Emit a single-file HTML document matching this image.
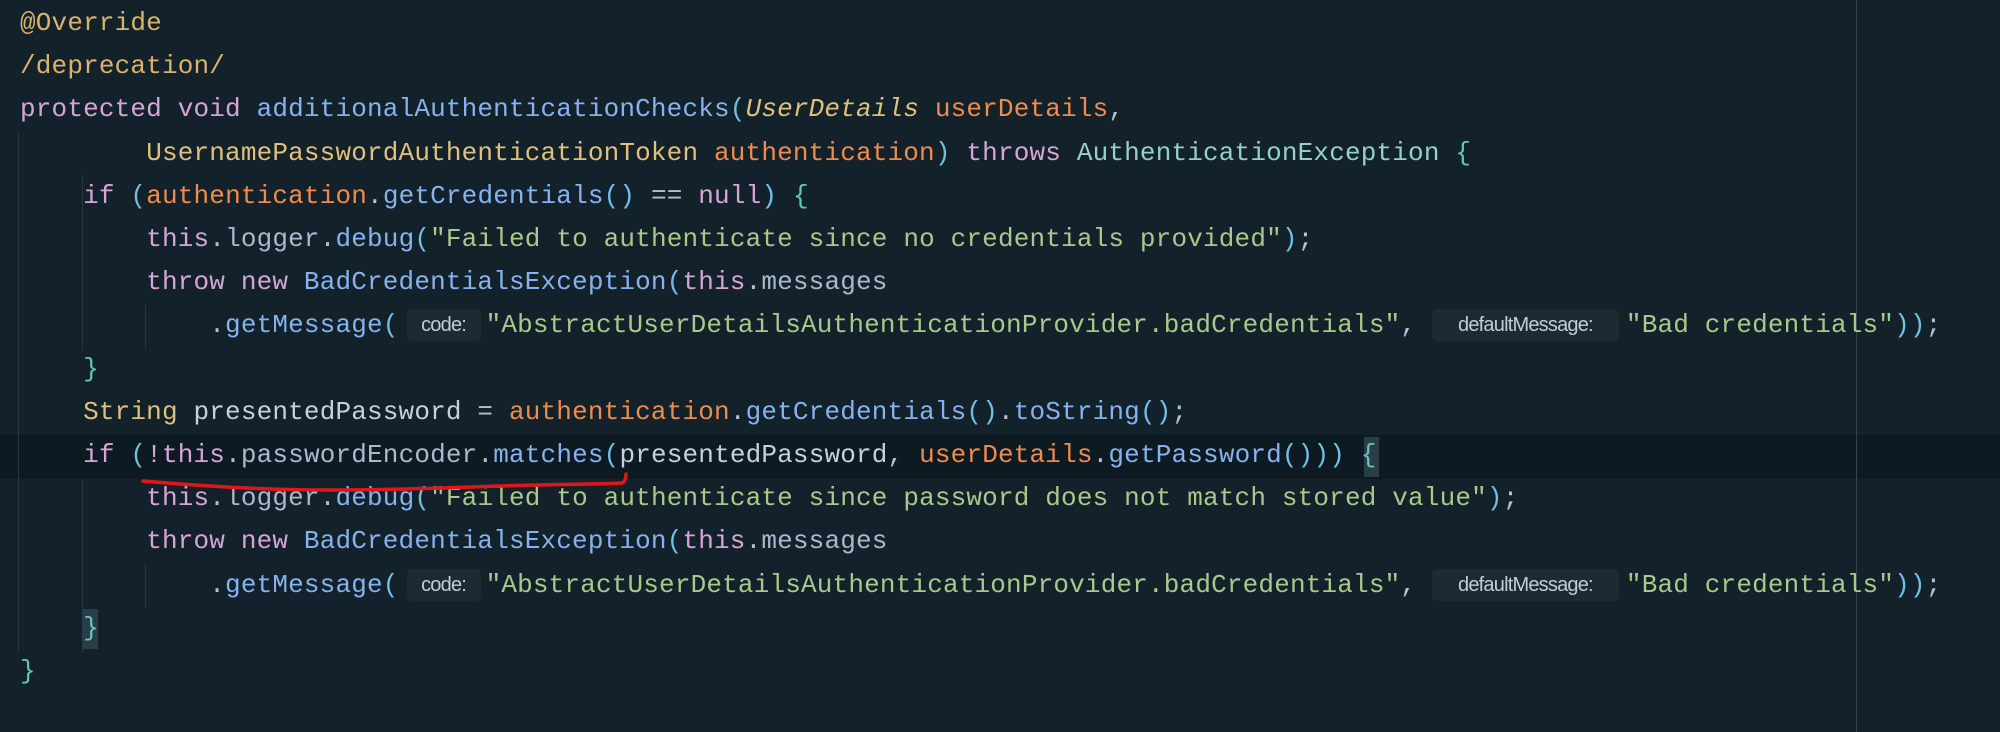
<!DOCTYPE html>
<html><head><meta charset="utf-8"><style>
html,body{margin:0;padding:0;}
body{width:2000px;height:732px;background:#13212a;position:relative;overflow:hidden;
font-family:"Liberation Mono",monospace;font-size:26px;letter-spacing:0.17px;}
.l{position:absolute;left:20px;height:43.2px;line-height:43.2px;white-space:pre;color:#b4c2cf;}
.k{color:#d6a5d8}.m{color:#86b2ee}.f{color:#a9b9cf}.p{color:#ef8b4c}.t{color:#dfc07c}
.e{color:#93d1c9}.s{color:#a8c98b}.b{color:#72bfe6}.c{color:#62c6bd}.v{color:#c6d1dc}.a{color:#d8b46b}
.h{display:inline-block;font-family:"Liberation Sans",sans-serif;font-size:20px;letter-spacing:-0.8px;color:#c3ccd4;background:#1b2a33;border-radius:5px;height:32px;line-height:32px;vertical-align:1px;text-align:center;}
.g{position:absolute;width:1px;background:#26363f;}
</style></head><body>
<div style="position:absolute;left:0;top:435px;width:2000px;height:44px;background:#0e1a22"></div>
<div style="position:absolute;left:1856px;top:0;width:1px;height:732px;background:#31434d"></div>
<div class="g" style="left:18px;top:132px;height:520px"></div>
<div class="g" style="left:82px;top:175px;height:175px"></div>
<div class="g" style="left:145px;top:305px;height:45px"></div>
<div class="g" style="left:82px;top:478px;height:175px"></div>
<div class="g" style="left:145px;top:563px;height:45px"></div>
<div style="position:absolute;left:1364px;top:437px;width:15px;height:40px;background:#2b3d49"></div>
<div style="position:absolute;left:82px;top:609px;width:16px;height:40px;background:#2b3d49"></div>

<div class="l" style="top:2px"><span class="a">@Override</span></div>
<div class="l" style="top:45.2px"><span class="a">/deprecation/</span></div>
<div class="l" style="top:88.4px"><span class="k">protected void </span><span class="m">additionalAuthenticationChecks</span><span class="b">(</span><span class="t"><i>UserDetails</i></span> <span class="p">userDetails</span>,</div>
<div class="l" style="top:131.6px">        <span class="t">UsernamePasswordAuthenticationToken</span> <span class="p">authentication</span><span class="b">)</span> <span class="k">throws</span> <span class="e">AuthenticationException</span> <span class="c">{</span></div>
<div class="l" style="top:174.8px">    <span class="k">if</span> <span class="b">(</span><span class="p">authentication</span>.<span class="m">getCredentials</span><span class="b">()</span> == <span class="k">null</span><span class="b">)</span> <span class="c">{</span></div>
<div class="l" style="top:218px">        <span class="k">this</span>.<span class="f">logger</span>.<span class="m">debug</span><span class="b">(</span><span class="s">"Failed to authenticate since no credentials provided"</span><span class="b">)</span>;</div>
<div class="l" style="top:261.2px">        <span class="k">throw new </span><span class="m">BadCredentialsException</span><span class="b">(</span><span class="k">this</span>.<span class="f">messages</span></div>
<div class="l" style="top:304.4px">            .<span class="m">getMessage</span><span class="b">(</span><span class="h" style="width:74px;margin-left:8px;margin-right:5px">code:</span><span class="s">"AbstractUserDetailsAuthenticationProvider.badCredentials"</span>, <span class="h" style="width:187px;margin-right:7px">defaultMessage:</span><span class="s">"Bad credentials"</span><span class="b">))</span>;</div>
<div class="l" style="top:347.6px">    <span class="c">}</span></div>
<div class="l" style="top:390.8px">    <span class="t">String</span> <span class="v">presentedPassword</span> = <span class="p">authentication</span>.<span class="m">getCredentials</span><span class="b">()</span>.<span class="m">toString</span><span class="b">()</span>;</div>
<div class="l" style="top:434px">    <span class="k">if</span> <span class="b">(</span><span class="k">!this</span>.<span class="f">passwordEncoder</span>.<span class="m">matches</span><span class="b">(</span><span class="v">presentedPassword</span>, <span class="p">userDetails</span>.<span class="m">getPassword</span><span class="b">()))</span> <span class="c">{</span></div>
<div class="l" style="top:477.2px">        <span class="k">this</span>.<span class="f">logger</span>.<span class="m">debug</span><span class="b">(</span><span class="s">"Failed to authenticate since password does not match stored value"</span><span class="b">)</span>;</div>
<div class="l" style="top:520.4px">        <span class="k">throw new </span><span class="m">BadCredentialsException</span><span class="b">(</span><span class="k">this</span>.<span class="f">messages</span></div>
<div class="l" style="top:563.6px">            .<span class="m">getMessage</span><span class="b">(</span><span class="h" style="width:74px;margin-left:8px;margin-right:5px">code:</span><span class="s">"AbstractUserDetailsAuthenticationProvider.badCredentials"</span>, <span class="h" style="width:187px;margin-right:7px">defaultMessage:</span><span class="s">"Bad credentials"</span><span class="b">))</span>;</div>
<div class="l" style="top:606.8px">    <span class="c">}</span></div>
<div class="l" style="top:650px"><span class="c">}</span></div>

<svg style="position:absolute;left:0;top:0" width="2000" height="732">
<path d="M143 481 C200 486 260 490 330 490 C420 490 480 486 540 485 C580 484 610 484 622 483 C625 482 626 478 626 474" stroke="#e0161a" stroke-width="3.5" fill="none" stroke-linecap="round"/>
</svg>
</body></html>
